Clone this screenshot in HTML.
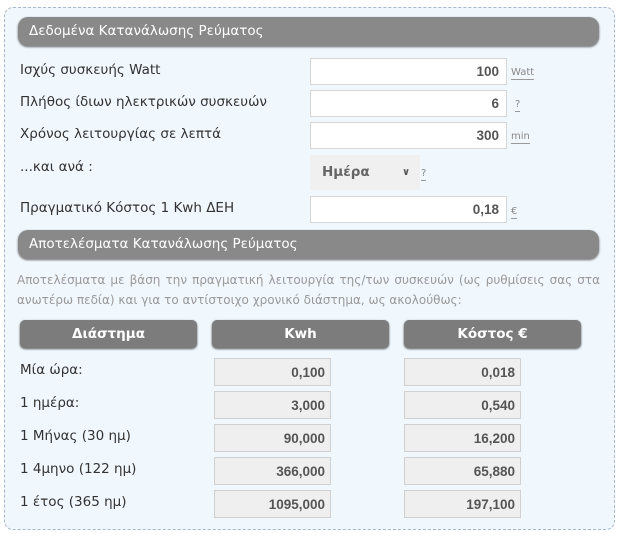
<!DOCTYPE html>
<html><head><meta charset="utf-8"><style>
*{box-sizing:border-box;margin:0;padding:0}
body{width:620px;height:538px;background:#fff;font-family:"DejaVu Sans","Liberation Sans",sans-serif;position:relative;overflow:hidden}
.wrap{position:absolute;left:4px;top:7px;width:611px;height:523px;border:1px dashed #a9b8c8;border-radius:9px;background:#f0f7fd}
.a{position:absolute}
.bar{position:absolute;left:18px;width:581px;height:29px;background:#898989;border-radius:10px;color:#fff;font-size:13.5px;line-height:29px;padding-left:11px;box-shadow:0 1px 2px #666}
.lbl{position:absolute;left:20px;font-size:13.5px;color:#333}
.inp{position:absolute;left:310px;width:197px;height:27px;background:#fff;border:1px solid #d6d6d6;text-align:right;padding-right:7px;font-weight:bold;font-family:"Liberation Sans",sans-serif;font-size:13.5px;line-height:25px;color:#555}
.u{position:absolute;left:511px;font-size:10px;color:#888;border-bottom:1px solid #999;line-height:13px}
.th{position:absolute;top:320px;width:177px;height:28px;background:#7c7c7c;border-radius:5px;color:#fff;font-weight:bold;font-size:13.5px;text-align:center;line-height:28px;box-shadow:0 1px 2px #555}
.v{position:absolute;width:117px;height:28px;background:#efefef;border:1px solid #d0d0d0;text-align:right;padding-right:5px;font-weight:bold;font-family:"Liberation Sans",sans-serif;font-size:13.5px;line-height:27px;color:#555}
.p{position:absolute;left:17px;width:583px;font-size:12px;color:#999;line-height:20px}
</style></head><body>
<div class="wrap"></div>
<div class="bar" style="top:17px">Δεδομένα Κατανάλωσης Ρεύματος</div>
<div class="lbl" style="top:62px">Ισχύς συσκευής Watt</div>
<div class="lbl" style="top:94px">Πλήθος ίδιων ηλεκτρικών συσκευών</div>
<div class="lbl" style="top:126px">Χρόνος λειτουργίας σε λεπτά</div>
<div class="lbl" style="top:159px">...και ανά :</div>
<div class="lbl" style="top:200px">Πραγματικό Κόστος 1 Kwh ΔΕΗ</div>
<div class="inp" style="top:58px">100</div>
<div class="inp" style="top:90px">6</div>
<div class="inp" style="top:122px">300</div>
<div class="inp" style="top:196px">0,18</div>
<div class="a" style="left:310px;top:155px;width:110px;height:35px;background:#f0f0f0;font-weight:bold;font-size:13.5px;color:#666;line-height:35px;padding-left:12px">Ημέρα<span style="position:absolute;left:92px;font-size:10px;color:#555">&#8744;</span></div>
<div class="u" style="top:66px">Watt</div>
<div class="u" style="top:98px;left:515px">?</div>
<div class="u" style="top:130px">min</div>
<div class="u" style="top:167px;left:421px">?</div>
<div class="u" style="top:205px">€</div>
<div class="bar" style="top:230px">Αποτελέσματα Κατανάλωσης Ρεύματος</div>
<div class="p" style="top:270px;text-align:justify;text-align-last:justify">Αποτελέσματα με βάση την πραγματική λειτουργία της/των συσκευών (ως ρυθμίσεις σας στα</div>
<div class="p" style="top:290px">ανωτέρω πεδία) και για το αντίστοιχο χρονικό διάστημα, ως ακολούθως:</div>
<div class="th" style="left:20px">Διάστημα</div>
<div class="th" style="left:212px">Kwh</div>
<div class="th" style="left:404px">Κόστος €</div>
<div class="lbl" style="top:362px">Μία ώρα:</div>
<div class="lbl" style="top:395px">1 ημέρα:</div>
<div class="lbl" style="top:428px">1 Μήνας (30 ημ)</div>
<div class="lbl" style="top:461px">1 4μηνο (122 ημ)</div>
<div class="lbl" style="top:494px">1 έτος (365 ημ)</div>
<div class="v" style="left:214px;top:358px">0,100</div><div class="v" style="left:404px;top:358px">0,018</div>
<div class="v" style="left:214px;top:391px">3,000</div><div class="v" style="left:404px;top:391px">0,540</div>
<div class="v" style="left:214px;top:424px">90,000</div><div class="v" style="left:404px;top:424px">16,200</div>
<div class="v" style="left:214px;top:457px">366,000</div><div class="v" style="left:404px;top:457px">65,880</div>
<div class="v" style="left:214px;top:490px">1095,000</div><div class="v" style="left:404px;top:490px">197,100</div>
</body></html>
